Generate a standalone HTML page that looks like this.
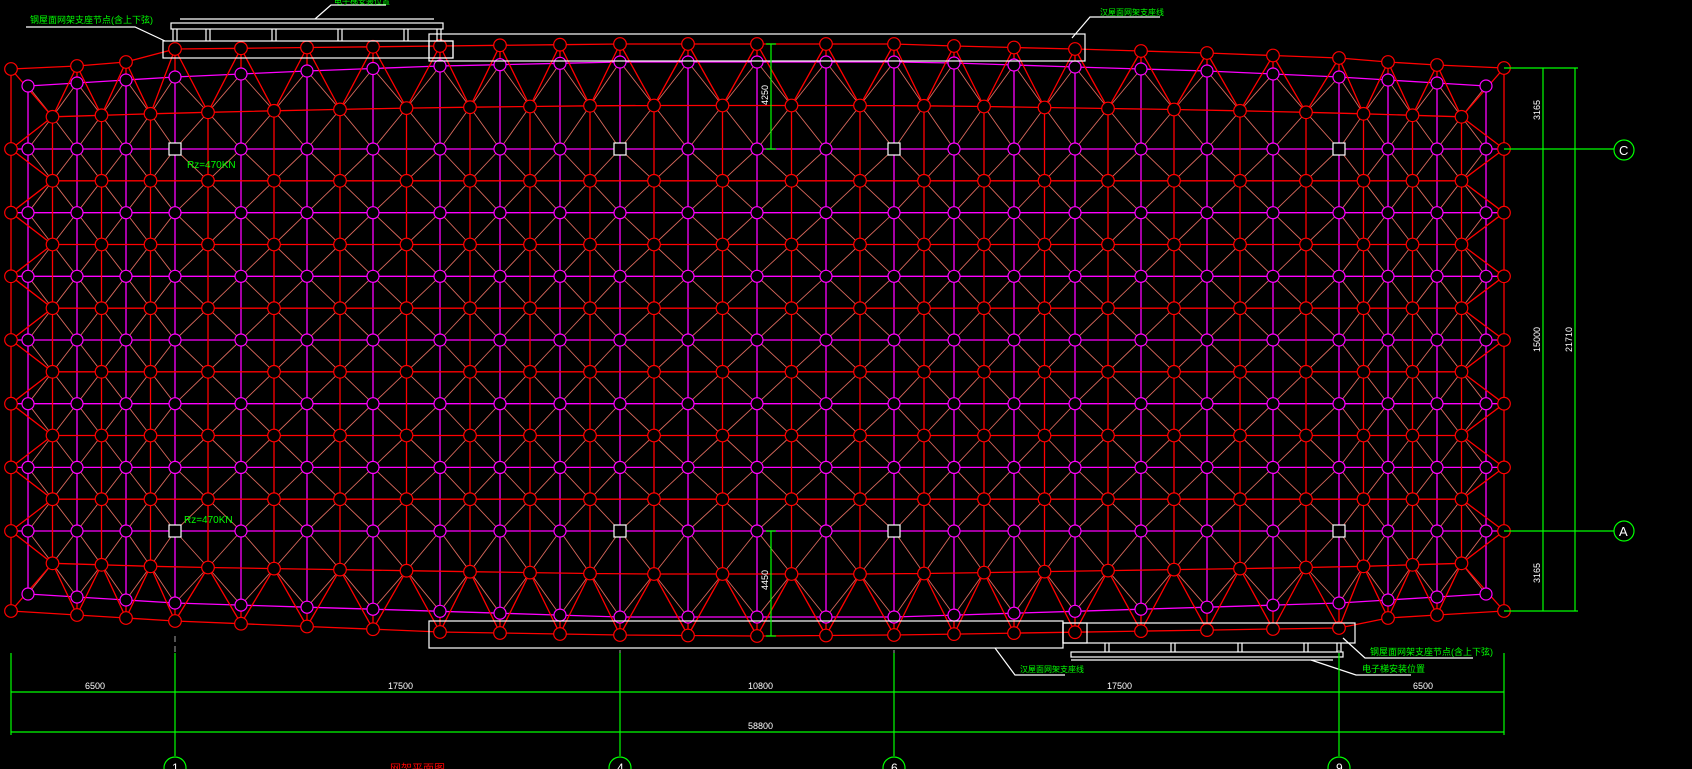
<!DOCTYPE html>
<html><head><meta charset="utf-8">
<style>
html,body{margin:0;padding:0;background:#000;overflow:hidden}
svg{display:block}
text{font-family:"Liberation Sans","Noto Sans CJK SC",sans-serif}
</style></head>
<body>
<svg id="s" width="1692" height="769" viewBox="0 0 1692 769" xmlns="http://www.w3.org/2000/svg">
<rect width="1692" height="769" fill="#000"/>
<g id="grid"></g>
<g id="static" fill="none" stroke-width="1.2">
  <!-- top support boxes -->
  <g stroke="#fff">
    <line x1="180" y1="19" x2="434" y2="19"/>
    <rect x="171" y="23" width="272" height="6"/>
    <rect x="163" y="41" width="290" height="17"/>
    <rect x="429" y="34" width="656" height="27"/>
    <rect x="429" y="41" width="24" height="17"/>
    <path d="M173 29V41M177 29V41M206 29V41M210 29V41M272 29V41M276 29V41M338 29V41M342 29V41M404 29V41M408 29V41M437 29V41M441 29V41"/>
    <path d="M26 27H135L165 41"/>
    <path d="M315 19L331 5H386"/>
    <path d="M1072 38L1090 17H1160"/>
    <!-- bottom boxes -->
    <rect x="429" y="621" width="634" height="27"/>
    <rect x="1063" y="623" width="292" height="20"/>
    <rect x="1063" y="623" width="24" height="20"/>
    <rect x="1071" y="652" width="272" height="5"/>
    <line x1="1071" y1="660" x2="1333" y2="660"/>
    <path d="M1238 643V652M1242 643V652M1304 643V652M1308 643V652M1337 643V652M1341 643V652M1105 643V652M1109 643V652M1171 643V652M1175 643V652"/>
    <path d="M1343 638L1365 658H1473"/>
    <path d="M1311 660L1356 675H1411"/>
    <path d="M995 648L1015 675H1065"/>
  </g>
  <!-- green dims -->
  <g stroke="#0f0">
    <path d="M771 44V149M766 44H776M766 149H776"/>
    <path d="M771 531V636M766 531H776M766 636H776"/>
    <path d="M1504 68H1578M1504 611H1578M1504 149H1614M1504 531H1614"/>
    <path d="M1543 68V611M1575 68V611"/>
    <path d="M11 653V735M1504 653V735M175 653V756M620 653V756M894 653V756M1339 653V756"/>
    <path d="M11 692H1504M11 732H1504"/>
    <circle cx="1624" cy="150" r="10"/>
    <circle cx="1624" cy="531" r="10"/>
    <circle cx="175" cy="768" r="11"/>
    <circle cx="620" cy="768" r="11"/>
    <circle cx="894" cy="768" r="11"/>
    <circle cx="1339" cy="768" r="11"/>
  </g>
  <g stroke="#888" stroke-dasharray="6,4">
    <path d="M175 636V653M620 650V653M894 650V653M1339 650V653"/>
  </g>
</g>
<g fill="#0f0" font-size="10">
  <text x="30" y="23" font-size="9">钢屋面网架支座节点(含上下弦)</text>
  <text x="334" y="4" font-size="8">电子梯安装位置</text>
  <text x="1100" y="15" font-size="8">汉屋面网架支座线</text>
  <text x="1370" y="655" font-size="9">钢屋面网架支座节点(含上下弦)</text>
  <text x="1362" y="672" font-size="9">电子梯安装位置</text>
  <text x="1020" y="672" font-size="8">汉屋面网架支座线</text>
  <text x="187" y="168" font-size="10">Rz=470KN</text>
  <text x="184" y="523" font-size="10">Rz=470KN</text>
  <text x="1619" y="155" font-size="13" fill="#fff">C</text>
  <text x="1619" y="536" font-size="13" fill="#fff">A</text>
  <text x="172" y="772" font-size="12" fill="#fff">1</text>
  <text x="617" y="772" font-size="12" fill="#fff">4</text>
  <text x="891" y="772" font-size="12" fill="#fff">6</text>
  <text x="1336" y="772" font-size="12" fill="#fff">9</text>
</g>
<g fill="#fff" font-size="9">
  <text x="85" y="689">6500</text>
  <text x="388" y="689">17500</text>
  <text x="748" y="689">10800</text>
  <text x="1107" y="689">17500</text>
  <text x="1413" y="689">6500</text>
  <text x="748" y="729">58800</text>
  <text transform="translate(768,105) rotate(-90)">4250</text>
  <text transform="translate(768,590) rotate(-90)">4450</text>
  <text transform="translate(1540,120) rotate(-90)">3165</text>
  <text transform="translate(1540,583) rotate(-90)">3165</text>
  <text transform="translate(1540,352) rotate(-90)">15000</text>
  <text transform="translate(1572,352) rotate(-90)">21710</text>
</g>
<text x="390" y="772" fill="#f00" font-size="11" font-family="Noto Sans CJK SC">网架平面图</text>
</svg>
<script>
(function(){
var mc=[28,77,126,175,241,307,373,440,500,560,620,688,757,826,894,954,1014,1075,1141,1207,1273,1339,1388,1437,1486];
var topEdge=[[11,69],[77,66],[126,62],[175,49],[440,46],[620,44],[894,44],[954,46],[1075,49],[1207,53],[1339,58],[1388,62],[1437,65],[1504,68]];
var topMag=[[0,87],[28,86],[175,77],[307,71],[440,66],[620,62],[894,62],[954,63],[1075,67],[1207,71],[1339,77],[1388,80],[1437,83],[1486,86],[1520,87]];
var botMag=[[0,593],[28,594],[175,603],[620,617],[894,617],[1339,603],[1486,594],[1520,593]];
var botEdge=[[11,611],[126,618],[175,621],[440,632],[620,635],[757,636],[894,635],[1339,628],[1388,618],[1504,611]];
function ip(p,x){if(x<=p[0][0])return p[0][1];for(var i=1;i<p.length;i++){if(x<=p[i][0]){var a=p[i-1],b=p[i];return a[1]+(b[1]-a[1])*(x-a[0])/(b[0]-a[0]);}}return p[p.length-1][1];}
function M(k,x){if(k==0)return ip(topMag,x);if(k==8)return ip(botMag,x);return 149+(k-1)*63.67;}
var rc=[];for(var j=0;j<mc.length-1;j++)rc.push((mc[j]+mc[j+1])/2);
function R(i,x){return (M(i-1,x)+M(i,x))/2;}
var diag=[],red=[],mag=[],circR=[],circM=[];
function L(a,x1,y1,x2,y2){a.push('M'+x1.toFixed(1)+' '+y1.toFixed(1)+'L'+x2.toFixed(1)+' '+y2.toFixed(1));}
// diagonals
for(var j=0;j<rc.length;j++){var x=rc[j];for(var i=1;i<=8;i++){var y=R(i,x);
 L(diag,x,y,mc[j],M(i-1,mc[j]));L(diag,x,y,mc[j+1],M(i-1,mc[j+1]));L(diag,x,y,mc[j],M(i,mc[j]));L(diag,x,y,mc[j+1],M(i,mc[j+1]));}}
// magenta verticals & horizontals
for(var j=0;j<mc.length;j++){var x=mc[j];L(mag,x,M(0,x),x,M(8,x));}
for(var k=0;k<=8;k++){var s='';var xs=(k>=1&&k<=7)?[11].concat(mc,[1504]):mc;for(var q=0;q<xs.length;q++){s+=(q?'L':'M')+xs[q]+' '+M(k,xs[q]).toFixed(1);}mag.push(s);}
// red verticals & horizontals
for(var j=0;j<rc.length;j++){var x=rc[j];L(red,x,R(1,x),x,R(8,x));}
for(var i=1;i<=8;i++){var s='';for(var q=0;q<rc.length;q++){s+=(q?'L':'M')+rc[q]+' '+R(i,rc[q]).toFixed(1);}red.push(s);}
// edges
var ex=[11].concat(mc.slice(1,mc.length-1),[1504]);
var s1='',s2='';for(var q=0;q<ex.length;q++){s1+=(q?'L':'M')+ex[q]+' '+ip(topEdge,ex[q]).toFixed(1);s2+=(q?'L':'M')+ex[q]+' '+ip(botEdge,ex[q]).toFixed(1);}
red.push(s1);red.push(s2);
for(var q=0;q<ex.length;q++){var x=ex[q],yt=ip(topEdge,x),yb=ip(botEdge,x);
 for(var j=0;j<rc.length;j++){if(Math.abs(rc[j]-x)<40){L(red,x,yt,rc[j],R(1,rc[j]));L(red,x,yb,rc[j],R(8,rc[j]));}}
 if(x>20&&x<1495){L(red,x,yt,x,M(0,x));L(red,x,yb,x,M(8,x));}
 circR.push([x,yt]);circR.push([x,yb]);}
// side edge columns
[[11,0],[1504,rc.length-1]].forEach(function(e){var x=e[0],c=rc[e[1]];
 L(red,x,ip(topEdge,x),x,ip(botEdge,x));
 for(var k=1;k<=7;k++){var y=M(k,x);circR.push([x,y]);L(red,x,y,c,R(k,c));L(red,x,y,c,R(k+1,c));}
 L(red,x,ip(topEdge,x),c,R(1,c));L(red,x,ip(botEdge,x),c,R(8,c));});
for(var j=0;j<rc.length;j++)for(var i=1;i<=8;i++)circR.push([rc[j],R(i,rc[j])]);
for(var j=0;j<mc.length;j++)for(var k=0;k<=8;k++)circM.push([mc[j],M(k,mc[j])]);
var h='';
h+='<path d="'+diag.join('')+'" stroke="#d8685c" stroke-width="0.9" fill="none"/>';
h+='<path d="'+mag.join('')+'" stroke="#ff00ff" stroke-width="1.3" fill="none"/>';
h+='<path d="'+red.join('')+'" stroke="#ff0000" stroke-width="1.3" fill="none"/>';
circR.forEach(function(p){h+='<circle cx="'+p[0]+'" cy="'+p[1].toFixed(1)+'" r="6.3" fill="#000" stroke="#ff0000" stroke-width="1.2"/>';});
circM.forEach(function(p){h+='<circle cx="'+p[0]+'" cy="'+p[1].toFixed(1)+'" r="6" fill="#000" stroke="#ff00ff" stroke-width="1.2"/>';});
[175,620,894,1339].forEach(function(x){[149,531].forEach(function(y){h+='<rect x="'+(x-6)+'" y="'+(y-6)+'" width="12" height="12" fill="#000" stroke="#fff" stroke-width="1.2"/>';});});
document.getElementById('grid').innerHTML=h;
})();
</script>
</body></html>
